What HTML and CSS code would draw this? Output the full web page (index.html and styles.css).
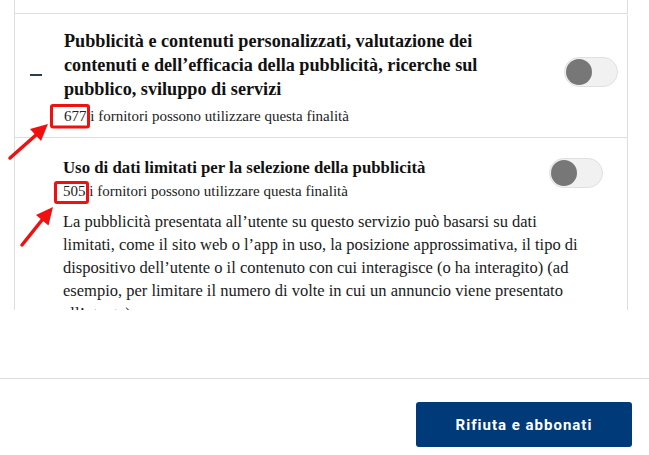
FILE: index.html
```html
<!DOCTYPE html>
<html lang="it">
<head>
<meta charset="utf-8">
<title>Finalità</title>
<link rel="stylesheet" href="styles.css">
</head>
<body>
<div class="page">
  <div class="scroll">
    <div class="card-prev"></div>
    <div class="card">
      <div class="row-main">
        <div class="minus"></div>
        <div class="main-text">
          <div class="main-title">Pubblicità e contenuti personalizzati, valutazione dei<br>contenuti e dell’efficacia della pubblicità, ricerche sul<br>pubblico, sviluppo di servizi</div>
          <div class="vendors">677 i fornitori possono utilizzare questa finalità</div>
        </div>
        <div class="toggle toggle-main"><span class="knob"></span></div>
      </div>
      <div class="sub-item">
        <div class="sub-head">
          <div class="sub-text">
            <div class="sub-title">Uso di dati limitati per la selezione della pubblicità</div>
            <div class="vendors">505 i fornitori possono utilizzare questa finalità</div>
          </div>
          <div class="toggle toggle-sub"><span class="knob"></span></div>
        </div>
        <p class="desc">La pubblicità presentata all’utente su questo servizio può basarsi su dati<br>limitati, come il sito web o l’app in uso, la posizione approssimativa, il tipo di<br>dispositivo dell’utente o il contenuto con cui interagisce (o ha interagito) (ad<br>esempio, per limitare il numero di volte in cui un annuncio viene presentato<br>all’utente).</p>
      </div>
    </div>
  </div>
  <div class="footer">
    <button class="btn">Rifiuta e abbonati</button>
  </div>
  <svg class="annot" width="649" height="455" viewBox="0 0 649 455">
    <rect x="51.5" y="105.5" width="37" height="21.5" rx="1.5" fill="none" stroke="#f01010" stroke-width="3"/>
    <rect x="55.5" y="182.5" width="32" height="20" rx="1.5" fill="none" stroke="#f01010" stroke-width="3"/>
    <line x1="10" y1="158" x2="36" y2="135" stroke="#f01010" stroke-width="3.5" stroke-linecap="round"/>
    <polygon points="48,124 41,141 30,129" fill="#f01010"/>
    <line x1="22" y1="245" x2="42" y2="220" stroke="#f01010" stroke-width="3.5" stroke-linecap="round"/>
    <polygon points="53,207 48.5,225.5 36,215" fill="#f01010"/>
  </svg>
</div>
</body>
</html>
```

FILE: styles.css
```css
* { box-sizing: border-box; }
html, body { margin: 0; padding: 0; background: #fff; }
body { font-family: "Liberation Serif", "Times New Roman", serif; color: #1a1a1a; }

.page {
  width: 649px;
  height: 455px;
  position: relative;
  overflow: hidden;
  display: flex;
  flex-direction: column;
}

.scroll {
  height: 310px;
  overflow: hidden;
  padding: 0 21px 0 14px;
  flex: none;
}

.card-prev {
  height: 14px;
  border: 1px solid #dedede;
  border-top: none;
}

.card {
  border: 1px solid #dedede;
  border-top: none;
  border-top-right-radius: 3px;
}

.row-main {
  display: flex;
  align-items: flex-start;
  padding: 15px 9px 10px 0;
}

.minus {
  width: 12px;
  height: 2px;
  background: #2b3d50;
  margin: 45px 22px 0 15px;
  flex: none;
}

.main-text { flex: 1; }

.main-title {
  font-size: 18.2px;
  font-weight: bold;
  line-height: 24px;
  color: #111;
}

.vendors {
  font-size: 15px;
  line-height: 22px;
  color: #222;
  margin-top: 4px;
}

.sub-item .vendors { margin-top: 1px; }

.toggle {
  width: 54px;
  height: 30px;
  border-radius: 15px;
  background: #f1f1f1;
  border: 1px solid #e0e0e0;
  flex: none;
  position: relative;
  display: flex;
  align-items: center;
  padding-left: 1px;
}

.knob {
  width: 26px;
  height: 26px;
  border-radius: 50%;
  background: #777;
  display: block;
}

.toggle-main { margin-top: 28px; }

.sub-item {
  border-top: 1px solid #dedede;
  padding: 19px 24px 0 48px;
}

.sub-head {
  display: flex;
  align-items: flex-start;
}

.sub-text { flex: 1; }

.sub-title {
  font-size: 16.8px;
  font-weight: bold;
  line-height: 22px;
  color: #111;
}

.toggle-sub { margin-top: 1px; }

.desc {
  margin: 8px 0 0;
  font-size: 16.5px;
  line-height: 23px;
  color: #1a1a1a;
}

.footer {
  flex: 1;
  display: flex;
  flex-direction: column;
  align-items: flex-end;
  padding-top: 68px;
}

.footer::before {
  content: "";
  display: block;
  width: 100%;
  border-top: 1px solid #dcdcdc;
  margin-bottom: 23px;
}

.btn {
  width: 216px;
  height: 45px;
  margin-right: 17px;
  background: #003a78;
  color: #fff;
  border: none;
  border-radius: 3px;
  font-family: Roboto, "Liberation Sans", sans-serif;
  font-weight: bold;
  font-size: 15px;
  letter-spacing: 1px;
}

.annot {
  position: absolute;
  left: 0;
  top: 0;
  pointer-events: none;
}
```
